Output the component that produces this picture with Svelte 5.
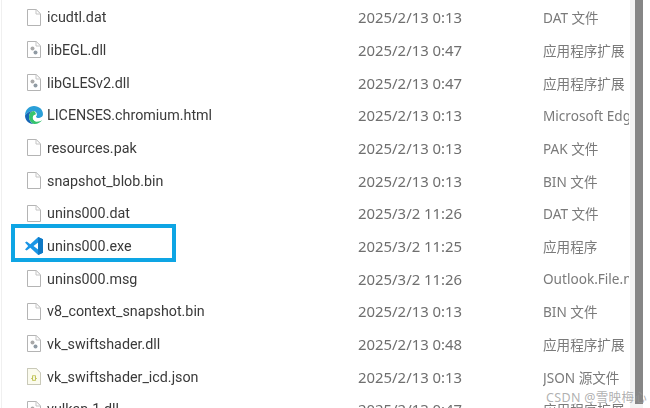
<script>
	// file rows, in the order of the listing
	const files = [
		{ name: 'icudtl.dat', date: '2025/2/13 0:13', type: 'DAT 文件', icon: 'blank' },
		{ name: 'libEGL.dll', date: '2025/2/13 0:47', type: '应用程序扩展', icon: 'dll' },
		{ name: 'libGLESv2.dll', date: '2025/2/13 0:47', type: '应用程序扩展', icon: 'dll' },
		{ name: 'LICENSES.chromium.html', date: '2025/2/13 0:13', type: 'Microsoft Edge', icon: 'edge' },
		{ name: 'resources.pak', date: '2025/2/13 0:13', type: 'PAK 文件', icon: 'blank' },
		{ name: 'snapshot_blob.bin', date: '2025/2/13 0:13', type: 'BIN 文件', icon: 'blank' },
		{ name: 'unins000.dat', date: '2025/3/2 11:26', type: 'DAT 文件', icon: 'blank' },
		{ name: 'unins000.exe', date: '2025/3/2 11:25', type: '应用程序', icon: 'vscode' },
		{ name: 'unins000.msg', date: '2025/3/2 11:26', type: 'Outlook.File.msg', icon: 'blank' },
		{ name: 'v8_context_snapshot.bin', date: '2025/2/13 0:13', type: 'BIN 文件', icon: 'blank' },
		{ name: 'vk_swiftshader.dll', date: '2025/2/13 0:48', type: '应用程序扩展', icon: 'dll' },
		{ name: 'vk_swiftshader_icd.json', date: '2025/2/13 0:13', type: 'JSON 源文件', icon: 'json' },
		{ name: 'vulkan-1.dll', date: '2025/2/13 0:47', type: '应用程序扩展', icon: 'dll' }
	];
</script>

<div class="window">
	<div class="list">
		{#each files as file}
			<div class="row">
				<span class="icon">
					{#if file.icon === 'edge'}
						<svg width="20" height="20" viewBox="0 0 20 20">
							<path d="M1 10.5C1 5 5 1 10 1c5 0 9 3.600 9 8.200 0 2.600-2.200 3.800-4.200 3.800-1.600 0-2.800-.6-2.800-1.300 0-.5.9-.8.9-2.200C12.900 7.400 11.400 6 9.300 6 5.500 6 2.800 8 1 10.500z" fill="#2a9fd8" />
							<path d="M1 10.500C2.800 8 5.500 6 9.300 6c-2.600.6-4.300 3-4.300 5.800 0 3.400 2.200 6.200 5 7.200-5 .4-9-3.600-9-8.500z" fill="#1565b5" />
							<path d="M10 19c-2.800-1-5-3.800-5-7.200 0-2.800 1.700-5.200 4.300-5.800 1.200 0 2.600 1.300 2.600 3.500-2.300.4-3.300 2-3.100 3.700.3 2.300 3 3.800 6 3.300 1.300-.2 2.500-.8 3.400-1.600C16.800 17.200 13.500 19.300 10 19z" fill="#36c46e" />
							<path d="M9 13.200c-.2-1.700.8-3.300 3-3.700 0 1.200-.9 1.500-.9 2.200 0 .7 1.700 1.300 3.700 1.300 1.200 0 2.800-.5 3.700-1.600-.4 1.600-1.200 3.200-2.600 3.900-.9.600-2 1-3.100 1.100-1.800-.1-3.500-1.200-3.800-3.200z" fill="#ffffff" />
						</svg>
					{:else if file.icon === 'vscode'}
						<svg width="20" height="20" viewBox="0 0 20 20">
							<path d="M14.200 1L6.300 8.300 2.700 5.500 1 6.500 4.200 10 1 13.500l1.700 1 3.600-2.800 7.900 7.300 4.800-2.300V3.300L14.200 1zm-.1 5.500v7L9.500 10l4.600-3.500z" fill="#1b96e6" />
							<path d="M14.200 1l4.800 2.300v13.400L14.200 19l-.1-5.500v-7z" fill="#0e78c4" />
						</svg>
					{:else}
						<svg width="14" height="17" viewBox="0 0 14 17">
							<path d="M.5.5h8.700l4.300 4.300v11.700H.5z" fill="#fff" stroke="#b4b4b4" />
							<path d="M9 .5v4.500h4.500" fill="none" stroke="#c4c4c4" />
							{#if file.icon === 'dll'}
								<circle cx="5.500" cy="7.500" r="2" fill="#a9a9a9" />
								<circle cx="8.500" cy="11.500" r="2" fill="#8f9aa3" />
							{:else if file.icon === 'json'}
								<path d="M.5.5h8.700l4.300 4.300v11.700H.5z" fill="#fbfbee" stroke="#c9c9b8" />
								<text x="7" y="12" class="brace">{'{}'}</text>
							{/if}
						</svg>
					{/if}
				</span>
				<span class="name">{file.name}</span>
				<span class="date">{file.date}</span>
				<span class="type">{file.type}</span>
			</div>
		{/each}
	</div>
	<div class="scrollbar"><div class="thumb"></div></div>
	<div class="highlight"></div>
	<div class="watermark">CSDN @雪映梅心</div>
</div>

<style>
	:global(body) {
		background: #fff;
	}
	.window {
		position: relative;
		display: flex;
		height: 408px;
		overflow: hidden;
		font-family: 'Noto Sans', 'Noto Sans CJK SC', sans-serif;
		font-size: 14.9px;
		background: #fff;
	}
	.list {
		flex: 1;
		min-width: 0;
		padding: 1px 0 0 22px;
		border-left: 1px solid #f0f0f0;
		margin-left: 1px;
		filter: blur(0.35px);
	}
	.row {
		display: grid;
		grid-template-columns: 23px 311px 185px 86px;
		align-items: center;
		height: 32.67px;
		white-space: nowrap;
	}
	.icon {
		display: flex;
		align-items: center;
		height: 20px;
		padding-left: 3px;
	}
	.row:nth-child(4) .icon,
	.row:nth-child(8) .icon {
		padding-left: 0;
	}
	.name {
		font-family: Roboto, 'Noto Sans', sans-serif;
		font-size: 14.3px;
		color: #3a3a3a;
	}
	.date {
		color: #6f6f6f;
	}
	.type {
		font-size: 13.6px;
		color: #7a7a7a;
		overflow: hidden;
	}
	.brace {
		font-size: 7px;
		font-weight: bold;
		fill: #b5b93a;
		text-anchor: middle;
	}
	.scrollbar {
		display: flex;
		justify-content: flex-end;
		box-sizing: border-box;
		width: 13px;
		margin-right: 7px;
		background: #f3f3f3;
	}
	.thumb {
		width: 8px;
		height: 404px;
		background: #868686;
	}
	.highlight {
		position: absolute;
		left: 11px;
		top: 224px;
		box-sizing: border-box;
		width: 165px;
		height: 38px;
		border: 4px solid #0ea5e4;
	}
	.watermark {
		position: absolute;
		right: 3px;
		top: 387px;
		font-size: 12.500px;
		color: rgba(150, 150, 150, 0.75);
		letter-spacing: 0.3px;
	}
</style>
